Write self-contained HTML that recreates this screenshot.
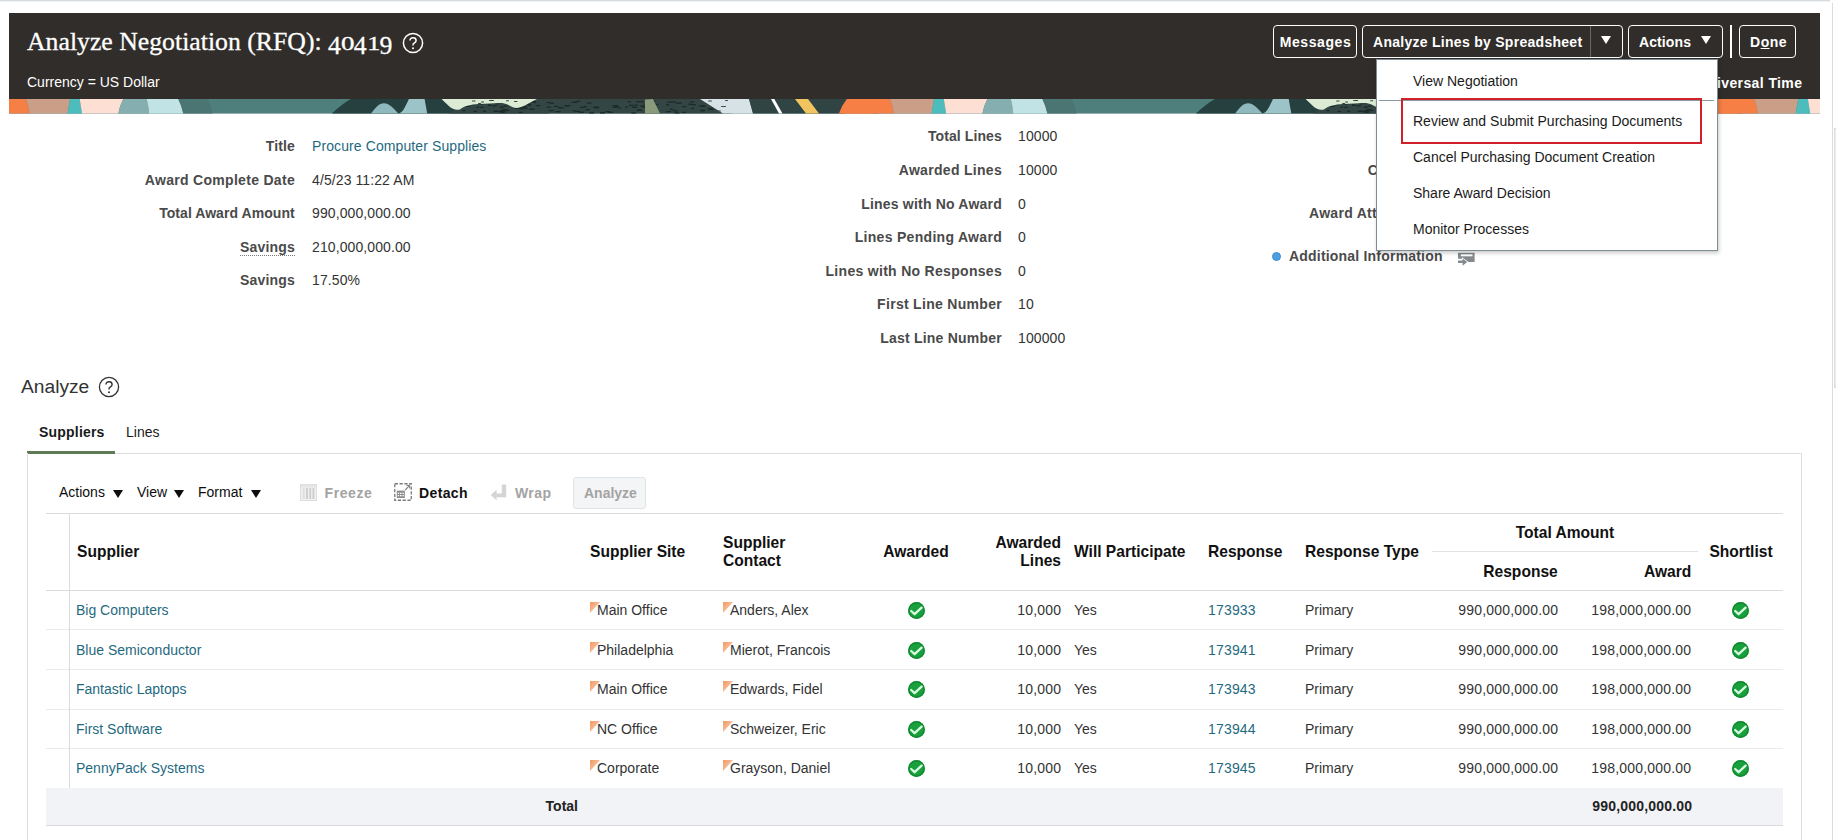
<!DOCTYPE html>
<html>
<head>
<meta charset="utf-8">
<title>Analyze Negotiation</title>
<style>
html,body{margin:0;padding:0;}
body{width:1836px;height:840px;position:relative;overflow:hidden;background:#fff;font-family:"Liberation Sans",sans-serif;font-size:14px;color:#333;}
.abs{position:absolute;white-space:nowrap;}
.t{position:absolute;white-space:nowrap;line-height:16px;height:16px;}
.b{font-weight:bold;}
.lbl{position:absolute;white-space:nowrap;line-height:16px;height:16px;font-weight:bold;color:#4a4a4a;text-align:right;font-size:14px;letter-spacing:0.3px;}
.val{position:absolute;white-space:nowrap;line-height:16px;height:16px;color:#333;font-size:14px;letter-spacing:0.1px;}
.link{color:#1f6a7f !important;}
#hdr{position:absolute;left:9px;top:13px;width:1811px;height:86px;background:#312d2a;}
#banner{position:absolute;left:9px;top:99px;width:1811px;height:14.6px;overflow:hidden;}
.btn{position:absolute;top:25px;height:31px;border:1px solid #fff;border-radius:4px;color:#fff;font-weight:bold;font-size:14px;line-height:32px;text-align:center;letter-spacing:0.45px;box-sizing:content-box;}
#menu{position:absolute;left:1376px;top:59px;width:340px;height:190px;background:#fff;border:1px solid #7f8d97;box-shadow:1px 2px 4px rgba(0,0,0,0.22);}
.mi{position:absolute;left:36px;font-size:14px;color:#1a1a1a;line-height:16px;white-space:nowrap;}
.th{position:absolute;white-space:nowrap;font-weight:bold;color:#111;font-size:16.9px;line-height:18px;transform:scaleX(0.922);margin-top:0.5px;}
.td{position:absolute;white-space:nowrap;font-size:14px;line-height:16px;color:#333;}
.od{position:relative;top:3.6px;}
.ox{display:inline-block;width:12.9px;text-align:center;font-size:18.6px;}
.ox span{display:inline-block;transform:scaleX(1.4);}
.num{letter-spacing:0.18px;margin-right:-0.18px;}
.hl{position:absolute;height:1px;background:#dfe3e6;}
.vl{position:absolute;width:1px;background:#dfe3e6;}
</style>
</head>
<body>
<!-- outer frame -->
<div class="abs" style="left:0;top:0;width:1830px;height:1px;background:#d6dbe0;"></div>
<div class="abs" style="left:0;top:1px;width:1830px;height:1px;background:#f1f3f5;"></div>
<div class="abs" style="left:1832px;top:3px;width:1px;height:837px;background:#dadcdf;"></div>
<div class="abs" style="left:1834px;top:128px;width:2px;height:260px;background:#ecedef;border-left:1px solid #dcdee1;border-top:1px solid #d4d6d9;border-bottom:1px solid #d4d6d9;box-sizing:border-box;"></div>
<!-- header -->
<div id="hdr"></div>
<div class="abs" id="title" style="left:27px;top:25px;font-family:'Liberation Serif',serif;font-size:25.75px;line-height:34px;color:#fff;-webkit-text-stroke:0.3px #fff;">Analyze Negotiation (RFQ): <span class="od">4</span><span class="ox"><span style="transform:scaleX(1.45);">0</span></span><span class="od">4</span><span class="ox"><span>1</span></span><span class="od">9</span></div>
<svg class="abs" style="left:401.4px;top:30.6px;" width="24" height="24" viewBox="0 0 24 24"><circle cx="12" cy="12" r="9.6" fill="none" stroke="#fff" stroke-width="1.5"/><path d="M8.9 9.6c0-1.8 1.3-2.9 3.1-2.9s3.1 1.1 3.1 2.7c0 1.3-.8 1.9-1.7 2.5-.9.6-1.4 1.1-1.4 2.2v.4" fill="none" stroke="#fff" stroke-width="1.5"/><circle cx="12" cy="17.3" r="1" fill="#fff"/></svg>
<div class="t" id="cur" style="left:27px;top:74px;color:#fff;font-size:14px;">Currency = US Dollar</div>
<div class="t b" id="utime" style="right:33.6px;top:74.8px;color:#fff;font-size:14px;letter-spacing:0.4px;">Coordinated Universal Time</div>

<div class="btn" style="left:1273px;width:82px;letter-spacing:0.6px;text-indent:1px;">Messages</div>
<div class="btn" style="left:1362px;width:259px;"></div>
<div class="abs" style="left:1373px;top:26px;line-height:32px;color:#fff;font-weight:bold;font-size:14px;letter-spacing:0.28px;">Analyze Lines by Spreadsheet</div>
<div class="abs" style="left:1590px;top:26px;width:1px;height:31px;background:#6b6764;"></div>
<div class="abs" style="left:1601.3px;top:35.7px;width:0;height:0;border-left:5.75px solid transparent;border-right:5.75px solid transparent;border-top:8px solid #fff;"></div>
<div class="btn" style="left:1628px;width:93px;"></div>
<div class="abs" style="left:1639px;top:26px;line-height:32px;color:#fff;font-weight:bold;font-size:14px;letter-spacing:0.1px;">Actions</div>
<div class="abs" style="left:1701.3px;top:35.7px;width:0;height:0;border-left:5.75px solid transparent;border-right:5.75px solid transparent;border-top:8px solid #fff;"></div>
<div class="abs" style="left:1730px;top:25px;width:2px;height:33px;background:#fff;"></div>
<div class="btn" style="left:1739px;width:55px;text-indent:2px;">D<span style="text-decoration:underline;">o</span>ne</div>

<!-- banner -->
<div id="banner">
<svg width="1811" height="15" viewBox="0 0 1811 15">
<g>
<rect x="0" y="0" width="864.6" height="14.6" fill="#4f7f7d"/>
<path d="M-26.2 0 H16.8 Q20 7 20.7 14.6 H-34.2 Q-31.2 6 -26.2 0 Z" fill="#f57f45"/>
<path d="M16.8 0 H61 L58.5 14.6 H20.7 Q20 7 16.8 0 Z" fill="#cb9f87"/>
<path d="M61 0 H70.7 L73 14.6 H58.5 Z" fill="#4cbcbc"/>
<path d="M70.7 0 H114.3 Q110.5 7 109.3 14.6 H73 Z" fill="#fddfd3"/>
<path d="M114.3 0 H137.7 Q139.6 7 140.2 14.6 H109.3 Q110.5 7 114.3 0 Z" fill="#84aeb0"/>
<path d="M137.7 0 H169.3 Q172.8 7 174.3 14.6 H140.2 Q139.6 7 137.7 0 Z" fill="#c1e3e6"/>
<path d="M169.3 0 H199 Q202 7 203.5 14.6 H174.3 Q172.8 7 169.3 0 Z" fill="#4a7573"/>
<path d="M322.8 14.6 Q333 5 341.7 0 H540 V14.6 Z" fill="#25403f"/>
<path d="M362 14.6 C367 8 370 4.3 375 4.3 C380 4.3 384 9 389.4 14.6 Z" fill="#8fb9bd"/>
<path d="M399.9 0 H415.6 L418.2 14.6 H389.4 C394 13.6 396 8 399.9 0 Z" fill="#9cc4c8"/>
<path d="M440 14.6 C446 10 452 9 457 7 L528 0 H700 L723 14.6 Z" fill="#344644"/>
<rect x="537.2" y="3.0" width="4.6" height="1.3" rx="0.6" fill="#1c2b2a"/>
<rect x="471.1" y="7.7" width="3.9" height="1.3" rx="0.6" fill="#1c2b2a"/>
<rect x="467.3" y="7.4" width="3.1" height="1.3" rx="0.6" fill="#1c2b2a"/>
<rect x="566.0" y="2.1" width="3.2" height="1.3" rx="0.6" fill="#1c2b2a"/>
<rect x="563.6" y="11.3" width="3.3" height="1.3" rx="0.6" fill="#1c2b2a"/>
<rect x="510.7" y="8.9" width="5.4" height="1.3" rx="0.6" fill="#1c2b2a"/>
<rect x="603.8" y="6.0" width="5.4" height="1.3" rx="0.6" fill="#1c2b2a"/>
<rect x="464.3" y="11.7" width="3.7" height="1.3" rx="0.6" fill="#1c2b2a"/>
<rect x="489.9" y="2.6" width="3.8" height="1.3" rx="0.6" fill="#1c2b2a"/>
<rect x="666.6" y="3.4" width="4.5" height="1.3" rx="0.6" fill="#1c2b2a"/>
<rect x="620.0" y="5.7" width="4.4" height="1.3" rx="0.6" fill="#1c2b2a"/>
<rect x="468.5" y="1.9" width="3.5" height="1.3" rx="0.6" fill="#1c2b2a"/>
<rect x="630.9" y="6.4" width="3.8" height="1.3" rx="0.6" fill="#1c2b2a"/>
<rect x="606.0" y="6.7" width="3.7" height="1.3" rx="0.6" fill="#1c2b2a"/>
<rect x="660.9" y="9.7" width="3.6" height="1.3" rx="0.6" fill="#1c2b2a"/>
<rect x="603.1" y="7.6" width="5.2" height="1.3" rx="0.6" fill="#1c2b2a"/>
<rect x="643.8" y="4.7" width="5.5" height="1.3" rx="0.6" fill="#1c2b2a"/>
<rect x="483.1" y="6.3" width="4.9" height="1.3" rx="0.6" fill="#1c2b2a"/>
<rect x="492.0" y="7.2" width="3.1" height="1.3" rx="0.6" fill="#1c2b2a"/>
<rect x="627.7" y="10.5" width="4.4" height="1.3" rx="0.6" fill="#1c2b2a"/>
<rect x="682.3" y="5.0" width="4.7" height="1.3" rx="0.6" fill="#1c2b2a"/>
<rect x="608.3" y="8.3" width="4.1" height="1.3" rx="0.6" fill="#1c2b2a"/>
<rect x="672.9" y="12.7" width="4.2" height="1.3" rx="0.6" fill="#1c2b2a"/>
<rect x="626.7" y="1.9" width="4.8" height="1.3" rx="0.6" fill="#1c2b2a"/>
<rect x="622.2" y="13.3" width="5.1" height="1.3" rx="0.6" fill="#1c2b2a"/>
<rect x="526.8" y="5.9" width="4.7" height="1.3" rx="0.6" fill="#1c2b2a"/>
<rect x="457.9" y="6.8" width="3.4" height="1.3" rx="0.6" fill="#1c2b2a"/>
<rect x="482.8" y="1.9" width="4.9" height="1.3" rx="0.6" fill="#1c2b2a"/>
<rect x="486.0" y="4.2" width="4.0" height="1.3" rx="0.6" fill="#1c2b2a"/>
<rect x="681.2" y="2.2" width="4.1" height="1.3" rx="0.6" fill="#1c2b2a"/>
<rect x="596.5" y="12.0" width="5.0" height="1.3" rx="0.6" fill="#1c2b2a"/>
<rect x="679.2" y="4.6" width="4.0" height="1.3" rx="0.6" fill="#1c2b2a"/>
<rect x="546.4" y="12.0" width="5.4" height="1.3" rx="0.6" fill="#1c2b2a"/>
<rect x="491.7" y="3.3" width="3.6" height="1.3" rx="0.6" fill="#1c2b2a"/>
<rect x="513.4" y="7.1" width="4.5" height="1.3" rx="0.6" fill="#1c2b2a"/>
<rect x="521.1" y="1.2" width="4.0" height="1.3" rx="0.6" fill="#1c2b2a"/>
<rect x="549.1" y="8.1" width="5.4" height="1.3" rx="0.6" fill="#1c2b2a"/>
<rect x="633.6" y="7.5" width="4.5" height="1.3" rx="0.6" fill="#1c2b2a"/>
<rect x="629.8" y="1.9" width="5.2" height="1.3" rx="0.6" fill="#1c2b2a"/>
<rect x="657.1" y="11.9" width="5.0" height="1.3" rx="0.6" fill="#1c2b2a"/>
<rect x="555.2" y="6.1" width="3.3" height="1.3" rx="0.6" fill="#1c2b2a"/>
<rect x="618.8" y="2.0" width="3.2" height="1.3" rx="0.6" fill="#1c2b2a"/>
<rect x="506.9" y="3.2" width="3.9" height="1.3" rx="0.6" fill="#1c2b2a"/>
<rect x="465.8" y="1.2" width="3.4" height="1.3" rx="0.6" fill="#1c2b2a"/>
<rect x="478.7" y="5.6" width="3.1" height="1.3" rx="0.6" fill="#1c2b2a"/>
<rect x="681.9" y="8.7" width="3.4" height="1.3" rx="0.6" fill="#1c2b2a"/>
<rect x="518.3" y="5.4" width="3.9" height="1.3" rx="0.6" fill="#1c2b2a"/>
<rect x="484.3" y="11.6" width="5.5" height="1.3" rx="0.6" fill="#1c2b2a"/>
<rect x="574.6" y="7.1" width="3.2" height="1.3" rx="0.6" fill="#1c2b2a"/>
<rect x="478.9" y="5.4" width="3.7" height="1.3" rx="0.6" fill="#1c2b2a"/>
<rect x="670.0" y="3.2" width="3.1" height="1.3" rx="0.6" fill="#1c2b2a"/>
<rect x="490.6" y="7.8" width="3.1" height="1.3" rx="0.6" fill="#1c2b2a"/>
<rect x="590.9" y="13.1" width="5.2" height="1.3" rx="0.6" fill="#1c2b2a"/>
<rect x="635.1" y="4.4" width="3.9" height="1.3" rx="0.6" fill="#1c2b2a"/>
<rect x="495.9" y="10.6" width="4.3" height="1.3" rx="0.6" fill="#1c2b2a"/>
<rect x="656.9" y="5.2" width="3.6" height="1.3" rx="0.6" fill="#1c2b2a"/>
<rect x="665.4" y="13.2" width="5.1" height="1.3" rx="0.6" fill="#1c2b2a"/>
<rect x="664.0" y="11.2" width="4.8" height="1.3" rx="0.6" fill="#1c2b2a"/>
<rect x="511.6" y="7.5" width="3.9" height="1.3" rx="0.6" fill="#1c2b2a"/>
<rect x="459.6" y="1.5" width="3.7" height="1.3" rx="0.6" fill="#1c2b2a"/>
<rect x="520.2" y="9.6" width="5.4" height="1.3" rx="0.6" fill="#1c2b2a"/>
<rect x="569.6" y="12.6" width="5.5" height="1.3" rx="0.6" fill="#1c2b2a"/>
<rect x="510.0" y="4.0" width="3.5" height="1.3" rx="0.6" fill="#1c2b2a"/>
<rect x="505.8" y="8.8" width="5.3" height="1.3" rx="0.6" fill="#1c2b2a"/>
<rect x="673.0" y="7.0" width="4.6" height="1.3" rx="0.6" fill="#1c2b2a"/>
<rect x="662.3" y="2.2" width="4.7" height="1.3" rx="0.6" fill="#1c2b2a"/>
<rect x="691.3" y="10.7" width="4.9" height="1.3" rx="0.6" fill="#1c2b2a"/>
<rect x="577.7" y="3.4" width="5.0" height="1.3" rx="0.6" fill="#1c2b2a"/>
<rect x="539.5" y="11.0" width="5.4" height="1.3" rx="0.6" fill="#1c2b2a"/>
<rect x="556.1" y="6.1" width="5.4" height="1.3" rx="0.6" fill="#1c2b2a"/>
<rect x="642.6" y="3.3" width="3.3" height="1.3" rx="0.6" fill="#1c2b2a"/>
<rect x="491.8" y="12.2" width="5.0" height="1.3" rx="0.6" fill="#1c2b2a"/>
<rect x="490.4" y="11.3" width="5.5" height="1.3" rx="0.6" fill="#1c2b2a"/>
<rect x="624.9" y="5.5" width="4.4" height="1.3" rx="0.6" fill="#1c2b2a"/>
<rect x="486.4" y="1.4" width="5.4" height="1.3" rx="0.6" fill="#1c2b2a"/>
<rect x="622.9" y="7.6" width="5.3" height="1.3" rx="0.6" fill="#1c2b2a"/>
<rect x="566.1" y="11.8" width="5.1" height="1.3" rx="0.6" fill="#1c2b2a"/>
<rect x="507.5" y="4.3" width="3.7" height="1.3" rx="0.6" fill="#1c2b2a"/>
<rect x="515.3" y="8.4" width="3.6" height="1.3" rx="0.6" fill="#1c2b2a"/>
<rect x="562.2" y="2.8" width="5.3" height="1.3" rx="0.6" fill="#1c2b2a"/>
<rect x="545.0" y="6.8" width="4.5" height="1.3" rx="0.6" fill="#1c2b2a"/>
<rect x="689.8" y="6.3" width="5.3" height="1.3" rx="0.6" fill="#1c2b2a"/>
<rect x="583.9" y="7.7" width="4.3" height="1.3" rx="0.6" fill="#1c2b2a"/>
<rect x="456.9" y="6.6" width="3.5" height="1.3" rx="0.6" fill="#1c2b2a"/>
<rect x="453.0" y="10.9" width="3.4" height="1.3" rx="0.6" fill="#1c2b2a"/>
<rect x="576.5" y="10.0" width="4.4" height="1.3" rx="0.6" fill="#1c2b2a"/>
<rect x="537.7" y="7.5" width="4.4" height="1.3" rx="0.6" fill="#1c2b2a"/>
<rect x="658.3" y="2.5" width="4.4" height="1.3" rx="0.6" fill="#1c2b2a"/>
<rect x="517.4" y="4.6" width="4.9" height="1.3" rx="0.6" fill="#1c2b2a"/>
<rect x="585.5" y="8.1" width="4.9" height="1.3" rx="0.6" fill="#1c2b2a"/>
<rect x="692.0" y="6.6" width="4.5" height="1.3" rx="0.6" fill="#1c2b2a"/>
<rect x="585.0" y="7.4" width="4.7" height="1.3" rx="0.6" fill="#1c2b2a"/>
<rect x="571.0" y="7.7" width="4.2" height="1.3" rx="0.6" fill="#1c2b2a"/>
<rect x="699.6" y="9.7" width="5.2" height="1.3" rx="0.6" fill="#1c2b2a"/>
<rect x="599.2" y="12.7" width="5.1" height="1.3" rx="0.6" fill="#1c2b2a"/>
<rect x="488.1" y="2.7" width="4.1" height="1.3" rx="0.6" fill="#1c2b2a"/>
<rect x="471.1" y="4.1" width="3.2" height="1.3" rx="0.6" fill="#1c2b2a"/>
<rect x="628.1" y="10.8" width="5.2" height="1.3" rx="0.6" fill="#1c2b2a"/>
<rect x="492.6" y="9.9" width="4.7" height="1.3" rx="0.6" fill="#1c2b2a"/>
<rect x="489.6" y="12.0" width="5.4" height="1.3" rx="0.6" fill="#1c2b2a"/>
<rect x="509.8" y="12.8" width="4.0" height="1.3" rx="0.6" fill="#1c2b2a"/>
<rect x="580.1" y="13.3" width="5.1" height="1.3" rx="0.6" fill="#1c2b2a"/>
<rect x="494.5" y="6.5" width="4.3" height="1.3" rx="0.6" fill="#1c2b2a"/>
<rect x="541.2" y="3.6" width="3.8" height="1.3" rx="0.6" fill="#1c2b2a"/>
<rect x="641.9" y="1.4" width="4.4" height="1.3" rx="0.6" fill="#1c2b2a"/>
<rect x="567.8" y="1.4" width="3.8" height="1.3" rx="0.6" fill="#1c2b2a"/>
<rect x="616.1" y="7.4" width="3.2" height="1.3" rx="0.6" fill="#1c2b2a"/>
<rect x="521.8" y="1.7" width="4.9" height="1.3" rx="0.6" fill="#1c2b2a"/>
<rect x="523.1" y="2.8" width="4.1" height="1.3" rx="0.6" fill="#1c2b2a"/>
<rect x="691.7" y="11.2" width="3.6" height="1.3" rx="0.6" fill="#1c2b2a"/>
<rect x="491.3" y="12.4" width="4.4" height="1.3" rx="0.6" fill="#1c2b2a"/>
<rect x="636.2" y="2.3" width="3.1" height="1.3" rx="0.6" fill="#1c2b2a"/>
<rect x="633.0" y="6.4" width="3.2" height="1.3" rx="0.6" fill="#1c2b2a"/>
<rect x="698.8" y="8.9" width="5.0" height="1.3" rx="0.6" fill="#1c2b2a"/>
<rect x="474.0" y="11.6" width="3.2" height="1.3" rx="0.6" fill="#1c2b2a"/>
<path d="M432.6 0 C438 5 442 10.8 448.3 10.8 C452 10.8 453 8 457.4 6.9 C462 5.8 466 5 470 5 C480 5 488 3.6 494 4.3 C500 5 502 8.9 507 8.9 C513 8.9 520 4 528 0 Z" fill="#dcecd4"/>
<rect x="463" y="1.6" width="3.5" height="1" rx="0.5" fill="#33423f"/>
<rect x="472" y="2.4" width="3" height="1" rx="0.5" fill="#33423f"/>
<rect x="480" y="0.9" width="5" height="1" rx="0.5" fill="#33423f"/>
<rect x="497" y="1.2" width="3" height="1" rx="0.5" fill="#33423f"/>
<rect x="505" y="2.0" width="3.5" height="1" rx="0.5" fill="#33423f"/>
<rect x="469" y="4.0" width="3" height="1" rx="0.5" fill="#33423f"/>
<rect x="489" y="4.6" width="3" height="1" rx="0.5" fill="#33423f"/>
<path d="M636 0.5 L644 0 L651 14.6 H636 Z" fill="#8a9a7a"/>
<path d="M691 0 H740 L744 14.6 H714 Z" fill="#d6e2e5"/>
<rect x="699" y="1.5" width="4" height="1.1" rx="0.5" fill="#3a4b49"/>
<rect x="716" y="1.0" width="3" height="1.1" rx="0.5" fill="#3a4b49"/>
<rect x="712" y="7" width="5" height="1.1" rx="0.5" fill="#3a4b49"/>
<rect x="708" y="11.5" width="4" height="1.1" rx="0.5" fill="#3a4b49"/>
<path d="M740 0 H845 L835 14.6 H744 Z" fill="#2f4443"/>
<path d="M762 0 H765.3 L773.5 14.6 H770 Z" fill="#ffffff"/>
<path d="M786 0 H799 L810 14.6 H797 Z" fill="#f2c45f"/>
<path d="M839 0 Q834 6 831 14.6 H869.1 V0 Z" fill="#f57f45"/>
</g>
<g transform="translate(864.1,0)">
<rect x="0" y="0" width="864.6" height="14.6" fill="#4f7f7d"/>
<path d="M-26.2 0 H16.8 Q20 7 20.7 14.6 H-34.2 Q-31.2 6 -26.2 0 Z" fill="#f57f45"/>
<path d="M16.8 0 H61 L58.5 14.6 H20.7 Q20 7 16.8 0 Z" fill="#cb9f87"/>
<path d="M61 0 H70.7 L73 14.6 H58.5 Z" fill="#4cbcbc"/>
<path d="M70.7 0 H114.3 Q110.5 7 109.3 14.6 H73 Z" fill="#fddfd3"/>
<path d="M114.3 0 H137.7 Q139.6 7 140.2 14.6 H109.3 Q110.5 7 114.3 0 Z" fill="#84aeb0"/>
<path d="M137.7 0 H169.3 Q172.8 7 174.3 14.6 H140.2 Q139.6 7 137.7 0 Z" fill="#c1e3e6"/>
<path d="M169.3 0 H199 Q202 7 203.5 14.6 H174.3 Q172.8 7 169.3 0 Z" fill="#4a7573"/>
<path d="M322.8 14.6 Q333 5 341.7 0 H540 V14.6 Z" fill="#25403f"/>
<path d="M362 14.6 C367 8 370 4.3 375 4.3 C380 4.3 384 9 389.4 14.6 Z" fill="#8fb9bd"/>
<path d="M399.9 0 H415.6 L418.2 14.6 H389.4 C394 13.6 396 8 399.9 0 Z" fill="#9cc4c8"/>
<path d="M440 14.6 C446 10 452 9 457 7 L528 0 H700 L723 14.6 Z" fill="#344644"/>
<rect x="537.2" y="3.0" width="4.6" height="1.3" rx="0.6" fill="#1c2b2a"/>
<rect x="471.1" y="7.7" width="3.9" height="1.3" rx="0.6" fill="#1c2b2a"/>
<rect x="467.3" y="7.4" width="3.1" height="1.3" rx="0.6" fill="#1c2b2a"/>
<rect x="566.0" y="2.1" width="3.2" height="1.3" rx="0.6" fill="#1c2b2a"/>
<rect x="563.6" y="11.3" width="3.3" height="1.3" rx="0.6" fill="#1c2b2a"/>
<rect x="510.7" y="8.9" width="5.4" height="1.3" rx="0.6" fill="#1c2b2a"/>
<rect x="603.8" y="6.0" width="5.4" height="1.3" rx="0.6" fill="#1c2b2a"/>
<rect x="464.3" y="11.7" width="3.7" height="1.3" rx="0.6" fill="#1c2b2a"/>
<rect x="489.9" y="2.6" width="3.8" height="1.3" rx="0.6" fill="#1c2b2a"/>
<rect x="666.6" y="3.4" width="4.5" height="1.3" rx="0.6" fill="#1c2b2a"/>
<rect x="620.0" y="5.7" width="4.4" height="1.3" rx="0.6" fill="#1c2b2a"/>
<rect x="468.5" y="1.9" width="3.5" height="1.3" rx="0.6" fill="#1c2b2a"/>
<rect x="630.9" y="6.4" width="3.8" height="1.3" rx="0.6" fill="#1c2b2a"/>
<rect x="606.0" y="6.7" width="3.7" height="1.3" rx="0.6" fill="#1c2b2a"/>
<rect x="660.9" y="9.7" width="3.6" height="1.3" rx="0.6" fill="#1c2b2a"/>
<rect x="603.1" y="7.6" width="5.2" height="1.3" rx="0.6" fill="#1c2b2a"/>
<rect x="643.8" y="4.7" width="5.5" height="1.3" rx="0.6" fill="#1c2b2a"/>
<rect x="483.1" y="6.3" width="4.9" height="1.3" rx="0.6" fill="#1c2b2a"/>
<rect x="492.0" y="7.2" width="3.1" height="1.3" rx="0.6" fill="#1c2b2a"/>
<rect x="627.7" y="10.5" width="4.4" height="1.3" rx="0.6" fill="#1c2b2a"/>
<rect x="682.3" y="5.0" width="4.7" height="1.3" rx="0.6" fill="#1c2b2a"/>
<rect x="608.3" y="8.3" width="4.1" height="1.3" rx="0.6" fill="#1c2b2a"/>
<rect x="672.9" y="12.7" width="4.2" height="1.3" rx="0.6" fill="#1c2b2a"/>
<rect x="626.7" y="1.9" width="4.8" height="1.3" rx="0.6" fill="#1c2b2a"/>
<rect x="622.2" y="13.3" width="5.1" height="1.3" rx="0.6" fill="#1c2b2a"/>
<rect x="526.8" y="5.9" width="4.7" height="1.3" rx="0.6" fill="#1c2b2a"/>
<rect x="457.9" y="6.8" width="3.4" height="1.3" rx="0.6" fill="#1c2b2a"/>
<rect x="482.8" y="1.9" width="4.9" height="1.3" rx="0.6" fill="#1c2b2a"/>
<rect x="486.0" y="4.2" width="4.0" height="1.3" rx="0.6" fill="#1c2b2a"/>
<rect x="681.2" y="2.2" width="4.1" height="1.3" rx="0.6" fill="#1c2b2a"/>
<rect x="596.5" y="12.0" width="5.0" height="1.3" rx="0.6" fill="#1c2b2a"/>
<rect x="679.2" y="4.6" width="4.0" height="1.3" rx="0.6" fill="#1c2b2a"/>
<rect x="546.4" y="12.0" width="5.4" height="1.3" rx="0.6" fill="#1c2b2a"/>
<rect x="491.7" y="3.3" width="3.6" height="1.3" rx="0.6" fill="#1c2b2a"/>
<rect x="513.4" y="7.1" width="4.5" height="1.3" rx="0.6" fill="#1c2b2a"/>
<rect x="521.1" y="1.2" width="4.0" height="1.3" rx="0.6" fill="#1c2b2a"/>
<rect x="549.1" y="8.1" width="5.4" height="1.3" rx="0.6" fill="#1c2b2a"/>
<rect x="633.6" y="7.5" width="4.5" height="1.3" rx="0.6" fill="#1c2b2a"/>
<rect x="629.8" y="1.9" width="5.2" height="1.3" rx="0.6" fill="#1c2b2a"/>
<rect x="657.1" y="11.9" width="5.0" height="1.3" rx="0.6" fill="#1c2b2a"/>
<rect x="555.2" y="6.1" width="3.3" height="1.3" rx="0.6" fill="#1c2b2a"/>
<rect x="618.8" y="2.0" width="3.2" height="1.3" rx="0.6" fill="#1c2b2a"/>
<rect x="506.9" y="3.2" width="3.9" height="1.3" rx="0.6" fill="#1c2b2a"/>
<rect x="465.8" y="1.2" width="3.4" height="1.3" rx="0.6" fill="#1c2b2a"/>
<rect x="478.7" y="5.6" width="3.1" height="1.3" rx="0.6" fill="#1c2b2a"/>
<rect x="681.9" y="8.7" width="3.4" height="1.3" rx="0.6" fill="#1c2b2a"/>
<rect x="518.3" y="5.4" width="3.9" height="1.3" rx="0.6" fill="#1c2b2a"/>
<rect x="484.3" y="11.6" width="5.5" height="1.3" rx="0.6" fill="#1c2b2a"/>
<rect x="574.6" y="7.1" width="3.2" height="1.3" rx="0.6" fill="#1c2b2a"/>
<rect x="478.9" y="5.4" width="3.7" height="1.3" rx="0.6" fill="#1c2b2a"/>
<rect x="670.0" y="3.2" width="3.1" height="1.3" rx="0.6" fill="#1c2b2a"/>
<rect x="490.6" y="7.8" width="3.1" height="1.3" rx="0.6" fill="#1c2b2a"/>
<rect x="590.9" y="13.1" width="5.2" height="1.3" rx="0.6" fill="#1c2b2a"/>
<rect x="635.1" y="4.4" width="3.9" height="1.3" rx="0.6" fill="#1c2b2a"/>
<rect x="495.9" y="10.6" width="4.3" height="1.3" rx="0.6" fill="#1c2b2a"/>
<rect x="656.9" y="5.2" width="3.6" height="1.3" rx="0.6" fill="#1c2b2a"/>
<rect x="665.4" y="13.2" width="5.1" height="1.3" rx="0.6" fill="#1c2b2a"/>
<rect x="664.0" y="11.2" width="4.8" height="1.3" rx="0.6" fill="#1c2b2a"/>
<rect x="511.6" y="7.5" width="3.9" height="1.3" rx="0.6" fill="#1c2b2a"/>
<rect x="459.6" y="1.5" width="3.7" height="1.3" rx="0.6" fill="#1c2b2a"/>
<rect x="520.2" y="9.6" width="5.4" height="1.3" rx="0.6" fill="#1c2b2a"/>
<rect x="569.6" y="12.6" width="5.5" height="1.3" rx="0.6" fill="#1c2b2a"/>
<rect x="510.0" y="4.0" width="3.5" height="1.3" rx="0.6" fill="#1c2b2a"/>
<rect x="505.8" y="8.8" width="5.3" height="1.3" rx="0.6" fill="#1c2b2a"/>
<rect x="673.0" y="7.0" width="4.6" height="1.3" rx="0.6" fill="#1c2b2a"/>
<rect x="662.3" y="2.2" width="4.7" height="1.3" rx="0.6" fill="#1c2b2a"/>
<rect x="691.3" y="10.7" width="4.9" height="1.3" rx="0.6" fill="#1c2b2a"/>
<rect x="577.7" y="3.4" width="5.0" height="1.3" rx="0.6" fill="#1c2b2a"/>
<rect x="539.5" y="11.0" width="5.4" height="1.3" rx="0.6" fill="#1c2b2a"/>
<rect x="556.1" y="6.1" width="5.4" height="1.3" rx="0.6" fill="#1c2b2a"/>
<rect x="642.6" y="3.3" width="3.3" height="1.3" rx="0.6" fill="#1c2b2a"/>
<rect x="491.8" y="12.2" width="5.0" height="1.3" rx="0.6" fill="#1c2b2a"/>
<rect x="490.4" y="11.3" width="5.5" height="1.3" rx="0.6" fill="#1c2b2a"/>
<rect x="624.9" y="5.5" width="4.4" height="1.3" rx="0.6" fill="#1c2b2a"/>
<rect x="486.4" y="1.4" width="5.4" height="1.3" rx="0.6" fill="#1c2b2a"/>
<rect x="622.9" y="7.6" width="5.3" height="1.3" rx="0.6" fill="#1c2b2a"/>
<rect x="566.1" y="11.8" width="5.1" height="1.3" rx="0.6" fill="#1c2b2a"/>
<rect x="507.5" y="4.3" width="3.7" height="1.3" rx="0.6" fill="#1c2b2a"/>
<rect x="515.3" y="8.4" width="3.6" height="1.3" rx="0.6" fill="#1c2b2a"/>
<rect x="562.2" y="2.8" width="5.3" height="1.3" rx="0.6" fill="#1c2b2a"/>
<rect x="545.0" y="6.8" width="4.5" height="1.3" rx="0.6" fill="#1c2b2a"/>
<rect x="689.8" y="6.3" width="5.3" height="1.3" rx="0.6" fill="#1c2b2a"/>
<rect x="583.9" y="7.7" width="4.3" height="1.3" rx="0.6" fill="#1c2b2a"/>
<rect x="456.9" y="6.6" width="3.5" height="1.3" rx="0.6" fill="#1c2b2a"/>
<rect x="453.0" y="10.9" width="3.4" height="1.3" rx="0.6" fill="#1c2b2a"/>
<rect x="576.5" y="10.0" width="4.4" height="1.3" rx="0.6" fill="#1c2b2a"/>
<rect x="537.7" y="7.5" width="4.4" height="1.3" rx="0.6" fill="#1c2b2a"/>
<rect x="658.3" y="2.5" width="4.4" height="1.3" rx="0.6" fill="#1c2b2a"/>
<rect x="517.4" y="4.6" width="4.9" height="1.3" rx="0.6" fill="#1c2b2a"/>
<rect x="585.5" y="8.1" width="4.9" height="1.3" rx="0.6" fill="#1c2b2a"/>
<rect x="692.0" y="6.6" width="4.5" height="1.3" rx="0.6" fill="#1c2b2a"/>
<rect x="585.0" y="7.4" width="4.7" height="1.3" rx="0.6" fill="#1c2b2a"/>
<rect x="571.0" y="7.7" width="4.2" height="1.3" rx="0.6" fill="#1c2b2a"/>
<rect x="699.6" y="9.7" width="5.2" height="1.3" rx="0.6" fill="#1c2b2a"/>
<rect x="599.2" y="12.7" width="5.1" height="1.3" rx="0.6" fill="#1c2b2a"/>
<rect x="488.1" y="2.7" width="4.1" height="1.3" rx="0.6" fill="#1c2b2a"/>
<rect x="471.1" y="4.1" width="3.2" height="1.3" rx="0.6" fill="#1c2b2a"/>
<rect x="628.1" y="10.8" width="5.2" height="1.3" rx="0.6" fill="#1c2b2a"/>
<rect x="492.6" y="9.9" width="4.7" height="1.3" rx="0.6" fill="#1c2b2a"/>
<rect x="489.6" y="12.0" width="5.4" height="1.3" rx="0.6" fill="#1c2b2a"/>
<rect x="509.8" y="12.8" width="4.0" height="1.3" rx="0.6" fill="#1c2b2a"/>
<rect x="580.1" y="13.3" width="5.1" height="1.3" rx="0.6" fill="#1c2b2a"/>
<rect x="494.5" y="6.5" width="4.3" height="1.3" rx="0.6" fill="#1c2b2a"/>
<rect x="541.2" y="3.6" width="3.8" height="1.3" rx="0.6" fill="#1c2b2a"/>
<rect x="641.9" y="1.4" width="4.4" height="1.3" rx="0.6" fill="#1c2b2a"/>
<rect x="567.8" y="1.4" width="3.8" height="1.3" rx="0.6" fill="#1c2b2a"/>
<rect x="616.1" y="7.4" width="3.2" height="1.3" rx="0.6" fill="#1c2b2a"/>
<rect x="521.8" y="1.7" width="4.9" height="1.3" rx="0.6" fill="#1c2b2a"/>
<rect x="523.1" y="2.8" width="4.1" height="1.3" rx="0.6" fill="#1c2b2a"/>
<rect x="691.7" y="11.2" width="3.6" height="1.3" rx="0.6" fill="#1c2b2a"/>
<rect x="491.3" y="12.4" width="4.4" height="1.3" rx="0.6" fill="#1c2b2a"/>
<rect x="636.2" y="2.3" width="3.1" height="1.3" rx="0.6" fill="#1c2b2a"/>
<rect x="633.0" y="6.4" width="3.2" height="1.3" rx="0.6" fill="#1c2b2a"/>
<rect x="698.8" y="8.9" width="5.0" height="1.3" rx="0.6" fill="#1c2b2a"/>
<rect x="474.0" y="11.6" width="3.2" height="1.3" rx="0.6" fill="#1c2b2a"/>
<path d="M432.6 0 C438 5 442 10.8 448.3 10.8 C452 10.8 453 8 457.4 6.9 C462 5.8 466 5 470 5 C480 5 488 3.6 494 4.3 C500 5 502 8.9 507 8.9 C513 8.9 520 4 528 0 Z" fill="#dcecd4"/>
<rect x="463" y="1.6" width="3.5" height="1" rx="0.5" fill="#33423f"/>
<rect x="472" y="2.4" width="3" height="1" rx="0.5" fill="#33423f"/>
<rect x="480" y="0.9" width="5" height="1" rx="0.5" fill="#33423f"/>
<rect x="497" y="1.2" width="3" height="1" rx="0.5" fill="#33423f"/>
<rect x="505" y="2.0" width="3.5" height="1" rx="0.5" fill="#33423f"/>
<rect x="469" y="4.0" width="3" height="1" rx="0.5" fill="#33423f"/>
<rect x="489" y="4.6" width="3" height="1" rx="0.5" fill="#33423f"/>
<path d="M636 0.5 L644 0 L651 14.6 H636 Z" fill="#8a9a7a"/>
<path d="M691 0 H740 L744 14.6 H714 Z" fill="#d6e2e5"/>
<rect x="699" y="1.5" width="4" height="1.1" rx="0.5" fill="#3a4b49"/>
<rect x="716" y="1.0" width="3" height="1.1" rx="0.5" fill="#3a4b49"/>
<rect x="712" y="7" width="5" height="1.1" rx="0.5" fill="#3a4b49"/>
<rect x="708" y="11.5" width="4" height="1.1" rx="0.5" fill="#3a4b49"/>
<path d="M740 0 H845 L835 14.6 H744 Z" fill="#2f4443"/>
<path d="M762 0 H765.3 L773.5 14.6 H770 Z" fill="#ffffff"/>
<path d="M786 0 H799 L810 14.6 H797 Z" fill="#f2c45f"/>
<path d="M839 0 Q834 6 831 14.6 H869.1 V0 Z" fill="#f57f45"/>
</g>
<g transform="translate(1728.2,0)">
<rect x="0" y="0" width="864.6" height="14.6" fill="#4f7f7d"/>
<path d="M-26.2 0 H16.8 Q20 7 20.7 14.6 H-34.2 Q-31.2 6 -26.2 0 Z" fill="#f57f45"/>
<path d="M16.8 0 H61 L58.5 14.6 H20.7 Q20 7 16.8 0 Z" fill="#cb9f87"/>
<path d="M61 0 H70.7 L73 14.6 H58.5 Z" fill="#4cbcbc"/>
<path d="M70.7 0 H114.3 Q110.5 7 109.3 14.6 H73 Z" fill="#fddfd3"/>
<path d="M114.3 0 H137.7 Q139.6 7 140.2 14.6 H109.3 Q110.5 7 114.3 0 Z" fill="#84aeb0"/>
<path d="M137.7 0 H169.3 Q172.8 7 174.3 14.6 H140.2 Q139.6 7 137.7 0 Z" fill="#c1e3e6"/>
<path d="M169.3 0 H199 Q202 7 203.5 14.6 H174.3 Q172.8 7 169.3 0 Z" fill="#4a7573"/>
<path d="M322.8 14.6 Q333 5 341.7 0 H540 V14.6 Z" fill="#25403f"/>
<path d="M362 14.6 C367 8 370 4.3 375 4.3 C380 4.3 384 9 389.4 14.6 Z" fill="#8fb9bd"/>
<path d="M399.9 0 H415.6 L418.2 14.6 H389.4 C394 13.6 396 8 399.9 0 Z" fill="#9cc4c8"/>
<path d="M440 14.6 C446 10 452 9 457 7 L528 0 H700 L723 14.6 Z" fill="#344644"/>
<rect x="537.2" y="3.0" width="4.6" height="1.3" rx="0.6" fill="#1c2b2a"/>
<rect x="471.1" y="7.7" width="3.9" height="1.3" rx="0.6" fill="#1c2b2a"/>
<rect x="467.3" y="7.4" width="3.1" height="1.3" rx="0.6" fill="#1c2b2a"/>
<rect x="566.0" y="2.1" width="3.2" height="1.3" rx="0.6" fill="#1c2b2a"/>
<rect x="563.6" y="11.3" width="3.3" height="1.3" rx="0.6" fill="#1c2b2a"/>
<rect x="510.7" y="8.9" width="5.4" height="1.3" rx="0.6" fill="#1c2b2a"/>
<rect x="603.8" y="6.0" width="5.4" height="1.3" rx="0.6" fill="#1c2b2a"/>
<rect x="464.3" y="11.7" width="3.7" height="1.3" rx="0.6" fill="#1c2b2a"/>
<rect x="489.9" y="2.6" width="3.8" height="1.3" rx="0.6" fill="#1c2b2a"/>
<rect x="666.6" y="3.4" width="4.5" height="1.3" rx="0.6" fill="#1c2b2a"/>
<rect x="620.0" y="5.7" width="4.4" height="1.3" rx="0.6" fill="#1c2b2a"/>
<rect x="468.5" y="1.9" width="3.5" height="1.3" rx="0.6" fill="#1c2b2a"/>
<rect x="630.9" y="6.4" width="3.8" height="1.3" rx="0.6" fill="#1c2b2a"/>
<rect x="606.0" y="6.7" width="3.7" height="1.3" rx="0.6" fill="#1c2b2a"/>
<rect x="660.9" y="9.7" width="3.6" height="1.3" rx="0.6" fill="#1c2b2a"/>
<rect x="603.1" y="7.6" width="5.2" height="1.3" rx="0.6" fill="#1c2b2a"/>
<rect x="643.8" y="4.7" width="5.5" height="1.3" rx="0.6" fill="#1c2b2a"/>
<rect x="483.1" y="6.3" width="4.9" height="1.3" rx="0.6" fill="#1c2b2a"/>
<rect x="492.0" y="7.2" width="3.1" height="1.3" rx="0.6" fill="#1c2b2a"/>
<rect x="627.7" y="10.5" width="4.4" height="1.3" rx="0.6" fill="#1c2b2a"/>
<rect x="682.3" y="5.0" width="4.7" height="1.3" rx="0.6" fill="#1c2b2a"/>
<rect x="608.3" y="8.3" width="4.1" height="1.3" rx="0.6" fill="#1c2b2a"/>
<rect x="672.9" y="12.7" width="4.2" height="1.3" rx="0.6" fill="#1c2b2a"/>
<rect x="626.7" y="1.9" width="4.8" height="1.3" rx="0.6" fill="#1c2b2a"/>
<rect x="622.2" y="13.3" width="5.1" height="1.3" rx="0.6" fill="#1c2b2a"/>
<rect x="526.8" y="5.9" width="4.7" height="1.3" rx="0.6" fill="#1c2b2a"/>
<rect x="457.9" y="6.8" width="3.4" height="1.3" rx="0.6" fill="#1c2b2a"/>
<rect x="482.8" y="1.9" width="4.9" height="1.3" rx="0.6" fill="#1c2b2a"/>
<rect x="486.0" y="4.2" width="4.0" height="1.3" rx="0.6" fill="#1c2b2a"/>
<rect x="681.2" y="2.2" width="4.1" height="1.3" rx="0.6" fill="#1c2b2a"/>
<rect x="596.5" y="12.0" width="5.0" height="1.3" rx="0.6" fill="#1c2b2a"/>
<rect x="679.2" y="4.6" width="4.0" height="1.3" rx="0.6" fill="#1c2b2a"/>
<rect x="546.4" y="12.0" width="5.4" height="1.3" rx="0.6" fill="#1c2b2a"/>
<rect x="491.7" y="3.3" width="3.6" height="1.3" rx="0.6" fill="#1c2b2a"/>
<rect x="513.4" y="7.1" width="4.5" height="1.3" rx="0.6" fill="#1c2b2a"/>
<rect x="521.1" y="1.2" width="4.0" height="1.3" rx="0.6" fill="#1c2b2a"/>
<rect x="549.1" y="8.1" width="5.4" height="1.3" rx="0.6" fill="#1c2b2a"/>
<rect x="633.6" y="7.5" width="4.5" height="1.3" rx="0.6" fill="#1c2b2a"/>
<rect x="629.8" y="1.9" width="5.2" height="1.3" rx="0.6" fill="#1c2b2a"/>
<rect x="657.1" y="11.9" width="5.0" height="1.3" rx="0.6" fill="#1c2b2a"/>
<rect x="555.2" y="6.1" width="3.3" height="1.3" rx="0.6" fill="#1c2b2a"/>
<rect x="618.8" y="2.0" width="3.2" height="1.3" rx="0.6" fill="#1c2b2a"/>
<rect x="506.9" y="3.2" width="3.9" height="1.3" rx="0.6" fill="#1c2b2a"/>
<rect x="465.8" y="1.2" width="3.4" height="1.3" rx="0.6" fill="#1c2b2a"/>
<rect x="478.7" y="5.6" width="3.1" height="1.3" rx="0.6" fill="#1c2b2a"/>
<rect x="681.9" y="8.7" width="3.4" height="1.3" rx="0.6" fill="#1c2b2a"/>
<rect x="518.3" y="5.4" width="3.9" height="1.3" rx="0.6" fill="#1c2b2a"/>
<rect x="484.3" y="11.6" width="5.5" height="1.3" rx="0.6" fill="#1c2b2a"/>
<rect x="574.6" y="7.1" width="3.2" height="1.3" rx="0.6" fill="#1c2b2a"/>
<rect x="478.9" y="5.4" width="3.7" height="1.3" rx="0.6" fill="#1c2b2a"/>
<rect x="670.0" y="3.2" width="3.1" height="1.3" rx="0.6" fill="#1c2b2a"/>
<rect x="490.6" y="7.8" width="3.1" height="1.3" rx="0.6" fill="#1c2b2a"/>
<rect x="590.9" y="13.1" width="5.2" height="1.3" rx="0.6" fill="#1c2b2a"/>
<rect x="635.1" y="4.4" width="3.9" height="1.3" rx="0.6" fill="#1c2b2a"/>
<rect x="495.9" y="10.6" width="4.3" height="1.3" rx="0.6" fill="#1c2b2a"/>
<rect x="656.9" y="5.2" width="3.6" height="1.3" rx="0.6" fill="#1c2b2a"/>
<rect x="665.4" y="13.2" width="5.1" height="1.3" rx="0.6" fill="#1c2b2a"/>
<rect x="664.0" y="11.2" width="4.8" height="1.3" rx="0.6" fill="#1c2b2a"/>
<rect x="511.6" y="7.5" width="3.9" height="1.3" rx="0.6" fill="#1c2b2a"/>
<rect x="459.6" y="1.5" width="3.7" height="1.3" rx="0.6" fill="#1c2b2a"/>
<rect x="520.2" y="9.6" width="5.4" height="1.3" rx="0.6" fill="#1c2b2a"/>
<rect x="569.6" y="12.6" width="5.5" height="1.3" rx="0.6" fill="#1c2b2a"/>
<rect x="510.0" y="4.0" width="3.5" height="1.3" rx="0.6" fill="#1c2b2a"/>
<rect x="505.8" y="8.8" width="5.3" height="1.3" rx="0.6" fill="#1c2b2a"/>
<rect x="673.0" y="7.0" width="4.6" height="1.3" rx="0.6" fill="#1c2b2a"/>
<rect x="662.3" y="2.2" width="4.7" height="1.3" rx="0.6" fill="#1c2b2a"/>
<rect x="691.3" y="10.7" width="4.9" height="1.3" rx="0.6" fill="#1c2b2a"/>
<rect x="577.7" y="3.4" width="5.0" height="1.3" rx="0.6" fill="#1c2b2a"/>
<rect x="539.5" y="11.0" width="5.4" height="1.3" rx="0.6" fill="#1c2b2a"/>
<rect x="556.1" y="6.1" width="5.4" height="1.3" rx="0.6" fill="#1c2b2a"/>
<rect x="642.6" y="3.3" width="3.3" height="1.3" rx="0.6" fill="#1c2b2a"/>
<rect x="491.8" y="12.2" width="5.0" height="1.3" rx="0.6" fill="#1c2b2a"/>
<rect x="490.4" y="11.3" width="5.5" height="1.3" rx="0.6" fill="#1c2b2a"/>
<rect x="624.9" y="5.5" width="4.4" height="1.3" rx="0.6" fill="#1c2b2a"/>
<rect x="486.4" y="1.4" width="5.4" height="1.3" rx="0.6" fill="#1c2b2a"/>
<rect x="622.9" y="7.6" width="5.3" height="1.3" rx="0.6" fill="#1c2b2a"/>
<rect x="566.1" y="11.8" width="5.1" height="1.3" rx="0.6" fill="#1c2b2a"/>
<rect x="507.5" y="4.3" width="3.7" height="1.3" rx="0.6" fill="#1c2b2a"/>
<rect x="515.3" y="8.4" width="3.6" height="1.3" rx="0.6" fill="#1c2b2a"/>
<rect x="562.2" y="2.8" width="5.3" height="1.3" rx="0.6" fill="#1c2b2a"/>
<rect x="545.0" y="6.8" width="4.5" height="1.3" rx="0.6" fill="#1c2b2a"/>
<rect x="689.8" y="6.3" width="5.3" height="1.3" rx="0.6" fill="#1c2b2a"/>
<rect x="583.9" y="7.7" width="4.3" height="1.3" rx="0.6" fill="#1c2b2a"/>
<rect x="456.9" y="6.6" width="3.5" height="1.3" rx="0.6" fill="#1c2b2a"/>
<rect x="453.0" y="10.9" width="3.4" height="1.3" rx="0.6" fill="#1c2b2a"/>
<rect x="576.5" y="10.0" width="4.4" height="1.3" rx="0.6" fill="#1c2b2a"/>
<rect x="537.7" y="7.5" width="4.4" height="1.3" rx="0.6" fill="#1c2b2a"/>
<rect x="658.3" y="2.5" width="4.4" height="1.3" rx="0.6" fill="#1c2b2a"/>
<rect x="517.4" y="4.6" width="4.9" height="1.3" rx="0.6" fill="#1c2b2a"/>
<rect x="585.5" y="8.1" width="4.9" height="1.3" rx="0.6" fill="#1c2b2a"/>
<rect x="692.0" y="6.6" width="4.5" height="1.3" rx="0.6" fill="#1c2b2a"/>
<rect x="585.0" y="7.4" width="4.7" height="1.3" rx="0.6" fill="#1c2b2a"/>
<rect x="571.0" y="7.7" width="4.2" height="1.3" rx="0.6" fill="#1c2b2a"/>
<rect x="699.6" y="9.7" width="5.2" height="1.3" rx="0.6" fill="#1c2b2a"/>
<rect x="599.2" y="12.7" width="5.1" height="1.3" rx="0.6" fill="#1c2b2a"/>
<rect x="488.1" y="2.7" width="4.1" height="1.3" rx="0.6" fill="#1c2b2a"/>
<rect x="471.1" y="4.1" width="3.2" height="1.3" rx="0.6" fill="#1c2b2a"/>
<rect x="628.1" y="10.8" width="5.2" height="1.3" rx="0.6" fill="#1c2b2a"/>
<rect x="492.6" y="9.9" width="4.7" height="1.3" rx="0.6" fill="#1c2b2a"/>
<rect x="489.6" y="12.0" width="5.4" height="1.3" rx="0.6" fill="#1c2b2a"/>
<rect x="509.8" y="12.8" width="4.0" height="1.3" rx="0.6" fill="#1c2b2a"/>
<rect x="580.1" y="13.3" width="5.1" height="1.3" rx="0.6" fill="#1c2b2a"/>
<rect x="494.5" y="6.5" width="4.3" height="1.3" rx="0.6" fill="#1c2b2a"/>
<rect x="541.2" y="3.6" width="3.8" height="1.3" rx="0.6" fill="#1c2b2a"/>
<rect x="641.9" y="1.4" width="4.4" height="1.3" rx="0.6" fill="#1c2b2a"/>
<rect x="567.8" y="1.4" width="3.8" height="1.3" rx="0.6" fill="#1c2b2a"/>
<rect x="616.1" y="7.4" width="3.2" height="1.3" rx="0.6" fill="#1c2b2a"/>
<rect x="521.8" y="1.7" width="4.9" height="1.3" rx="0.6" fill="#1c2b2a"/>
<rect x="523.1" y="2.8" width="4.1" height="1.3" rx="0.6" fill="#1c2b2a"/>
<rect x="691.7" y="11.2" width="3.6" height="1.3" rx="0.6" fill="#1c2b2a"/>
<rect x="491.3" y="12.4" width="4.4" height="1.3" rx="0.6" fill="#1c2b2a"/>
<rect x="636.2" y="2.3" width="3.1" height="1.3" rx="0.6" fill="#1c2b2a"/>
<rect x="633.0" y="6.4" width="3.2" height="1.3" rx="0.6" fill="#1c2b2a"/>
<rect x="698.8" y="8.9" width="5.0" height="1.3" rx="0.6" fill="#1c2b2a"/>
<rect x="474.0" y="11.6" width="3.2" height="1.3" rx="0.6" fill="#1c2b2a"/>
<path d="M432.6 0 C438 5 442 10.8 448.3 10.8 C452 10.8 453 8 457.4 6.9 C462 5.8 466 5 470 5 C480 5 488 3.6 494 4.3 C500 5 502 8.9 507 8.9 C513 8.9 520 4 528 0 Z" fill="#dcecd4"/>
<rect x="463" y="1.6" width="3.5" height="1" rx="0.5" fill="#33423f"/>
<rect x="472" y="2.4" width="3" height="1" rx="0.5" fill="#33423f"/>
<rect x="480" y="0.9" width="5" height="1" rx="0.5" fill="#33423f"/>
<rect x="497" y="1.2" width="3" height="1" rx="0.5" fill="#33423f"/>
<rect x="505" y="2.0" width="3.5" height="1" rx="0.5" fill="#33423f"/>
<rect x="469" y="4.0" width="3" height="1" rx="0.5" fill="#33423f"/>
<rect x="489" y="4.6" width="3" height="1" rx="0.5" fill="#33423f"/>
<path d="M636 0.5 L644 0 L651 14.6 H636 Z" fill="#8a9a7a"/>
<path d="M691 0 H740 L744 14.6 H714 Z" fill="#d6e2e5"/>
<rect x="699" y="1.5" width="4" height="1.1" rx="0.5" fill="#3a4b49"/>
<rect x="716" y="1.0" width="3" height="1.1" rx="0.5" fill="#3a4b49"/>
<rect x="712" y="7" width="5" height="1.1" rx="0.5" fill="#3a4b49"/>
<rect x="708" y="11.5" width="4" height="1.1" rx="0.5" fill="#3a4b49"/>
<path d="M740 0 H845 L835 14.6 H744 Z" fill="#2f4443"/>
<path d="M762 0 H765.3 L773.5 14.6 H770 Z" fill="#ffffff"/>
<path d="M786 0 H799 L810 14.6 H797 Z" fill="#f2c45f"/>
<path d="M839 0 Q834 6 831 14.6 H869.1 V0 Z" fill="#f57f45"/>
</g>
</svg>
</div>

<!-- left column -->
<div class="lbl" style="right:1541px;top:138px;letter-spacing:0.1px;margin-right:0.20px;">Title</div>
<div class="val link" style="left:312px;top:138px;">Procure Computer Supplies</div>
<div class="lbl" style="right:1541px;top:172px;">Award Complete Date</div>
<div class="val" style="left:312px;top:172px;">4/5/23 11:22 AM</div>
<div class="lbl" style="right:1541px;top:205px;letter-spacing:0.06px;margin-right:0.24px;">Total Award Amount</div>
<div class="val" style="left:312px;top:205px;">990,000,000.00</div>
<div class="lbl" style="right:1541px;top:239px;letter-spacing:0.15px;margin-right:0.15px;"><span style="border-bottom:1px dotted #777;">Savings</span></div>
<div class="val" style="left:312px;top:239px;">210,000,000.00</div>
<div class="lbl" style="right:1541px;top:272px;letter-spacing:0.15px;margin-right:0.15px;">Savings</div>
<div class="val" style="left:312px;top:272px;">17.50%</div>

<!-- middle column -->
<div class="lbl" style="right:834px;top:128px;letter-spacing:0.08px;margin-right:0.22px;">Total Lines</div>
<div class="val" style="left:1018px;top:128px;">10000</div>
<div class="lbl" style="right:834px;top:162px;">Awarded Lines</div>
<div class="val" style="left:1018px;top:162px;">10000</div>
<div class="lbl" style="right:834px;top:196px;letter-spacing:0.2px;margin-right:0.10px;">Lines with No Award</div>
<div class="val" style="left:1018px;top:196px;">0</div>
<div class="lbl" style="right:834px;top:229px;">Lines Pending Award</div>
<div class="val" style="left:1018px;top:229px;">0</div>
<div class="lbl" style="right:834px;top:263px;">Lines with No Responses</div>
<div class="val" style="left:1018px;top:263px;">0</div>
<div class="lbl" style="right:834px;top:296px;">First Line Number</div>
<div class="val" style="left:1018px;top:296px;">10</div>
<div class="lbl" style="right:834px;top:330px;letter-spacing:0.22px;margin-right:0.08px;">Last Line Number</div>
<div class="val" style="left:1018px;top:330px;">100000</div>

<!-- right column -->
<div class="lbl" style="left:1367.7px;top:162px;text-align:left;">Contract Terms</div>
<div class="lbl" style="left:1309px;top:205px;text-align:left;">Award Attachments</div>
<div class="abs" style="left:1272px;top:252px;width:9px;height:9px;border-radius:50%;background:#4a9fe0;border:1px solid #3d8ccc;box-sizing:border-box;"></div>
<div class="lbl" style="left:1289px;top:248px;text-align:left;letter-spacing:0.2px;">Additional Information</div>
<svg class="abs" style="left:1457px;top:249px;" width="19" height="18" viewBox="0 0 19 18"><rect x="1" y="3.8" width="16.6" height="9.2" fill="#85898c"/><rect x="3.8" y="5.3" width="11.7" height="2" fill="#fff"/><path d="M0 9.8 H5 L5 8.2 L12.2 13.6 H0 Z" fill="#fff"/><path d="M1 11.6 H5.6 V9.4 L10.2 12.9 L5.6 16.8 V14 H1 Z" fill="#85898c"/></svg>

<!-- menu -->
<div id="menu">
<div class="mi" style="top:13px;">View Negotiation</div>
<div class="abs" style="left:2px;top:40px;width:335px;height:1px;background:#8a9aa3;"></div>
<div class="abs" style="left:24px;top:38px;width:297px;height:42px;border:2px solid #d0202a;"></div>
<div class="mi" style="top:53px;">Review and Submit Purchasing Documents</div>
<div class="mi" style="top:89px;">Cancel Purchasing Document Creation</div>
<div class="mi" style="top:125px;">Share Award Decision</div>
<div class="mi" style="top:161px;">Monitor Processes</div>
</div>

<!-- Analyze heading -->
<div class="abs" id="anh" style="left:21px;top:374.3px;font-size:19.2px;line-height:26px;color:#333;">Analyze</div>
<svg class="abs" style="left:96.5px;top:375.4px;" width="24" height="24" viewBox="0 0 24 24"><circle cx="12" cy="12" r="9.6" fill="none" stroke="#333" stroke-width="1.3"/><path d="M8.9 9.6c0-1.8 1.3-2.9 3.1-2.9s3.1 1.1 3.1 2.7c0 1.3-.8 1.9-1.7 2.5-.9.6-1.4 1.1-1.4 2.2v.4" fill="none" stroke="#333" stroke-width="1.4"/><circle cx="12" cy="17.3" r="1" fill="#333"/></svg>

<!-- tabs -->
<div class="t b" style="left:39px;top:424px;color:#1a1a1a;letter-spacing:0.2px;">Suppliers</div>
<div class="t" style="left:126px;top:424px;color:#1a1a1a;">Lines</div>
<div class="abs" style="left:27px;top:451px;width:88px;height:3px;background:#5f7a56;"></div>
<div class="abs" style="left:115px;top:453px;width:1687px;height:1px;background:#dcdfe2;"></div>
<div class="vl" style="left:27px;top:453px;height:387px;background:#dcdfe2;"></div>
<div class="vl" style="left:1801px;top:453px;height:387px;background:#dcdfe2;"></div>

<!-- toolbar -->
<div class="t" style="left:59px;top:484px;color:#0d0d0d;">Actions</div>
<div class="abs" style="left:113px;top:489.6px;border-left:5.5px solid transparent;border-right:5.5px solid transparent;border-top:8px solid #0d0d0d;"></div>
<div class="t" style="left:137px;top:484px;color:#0d0d0d;">View</div>
<div class="abs" style="left:174px;top:489.6px;border-left:5.5px solid transparent;border-right:5.5px solid transparent;border-top:8px solid #0d0d0d;"></div>
<div class="t" style="left:198px;top:484px;color:#0d0d0d;">Format</div>
<div class="abs" style="left:251px;top:489.6px;border-left:5.5px solid transparent;border-right:5.5px solid transparent;border-top:8px solid #0d0d0d;"></div>

<svg class="abs" style="left:300px;top:484px;" width="18" height="18" viewBox="0 0 18 18"><rect x="0.5" y="0.5" width="16" height="16" fill="#f1f1f1" stroke="#dedede"/><rect x="1" y="1" width="15" height="2.5" fill="#e6e6e6"/><rect x="2.6" y="4" width="2.2" height="11" fill="#e0e0e0"/><rect x="6" y="4" width="2" height="11" fill="#cfcfcf"/><rect x="9.2" y="4" width="2" height="11" fill="#cfcfcf"/><rect x="12.4" y="4" width="2" height="11" fill="#cfcfcf"/></svg>
<div class="t b" style="left:324.5px;top:485px;color:#a3a3a3;letter-spacing:0.6px;">Freeze</div>
<svg class="abs" style="left:394px;top:483px;" width="18" height="18" viewBox="0 0 18 18"><rect x="0.75" y="0.75" width="16.5" height="16.5" fill="none" stroke="#7a7a7a" stroke-width="1.3" stroke-dasharray="3.2 1.6"/><rect x="2.8" y="7.6" width="8" height="7.4" fill="#8c8c8c"/><path d="M3.8 10.3h6M3.8 12.6h6" stroke="#fff" stroke-width="1.3"/><path d="M5.5 9.4v5M8 9.4v5" stroke="#8c8c8c" stroke-width="0.9"/><path d="M11.2 7 L15.4 2.6 M12.4 2.4 L15.6 2.4 L15.6 5.6" fill="none" stroke="#8a8a8a" stroke-width="1.2"/></svg>
<div class="t b" style="left:419px;top:485px;color:#111;letter-spacing:0.38px;">Detach</div>
<svg class="abs" style="left:490px;top:484px;" width="18" height="18" viewBox="0 0 18 18"><path d="M11.8 0.4 H16.2 V13.2 H6.3 V9.5 H11.8 Z" fill="#d4d4d4"/><path d="M6.6 5.8 L0.7 10.9 L6.6 16.2 Z" fill="#d4d4d4"/></svg>
<div class="t b" style="left:515px;top:485px;color:#a3a3a3;letter-spacing:0.4px;">Wrap</div>
<div class="abs" style="left:573px;top:477px;width:71px;height:30px;border:1px solid #e1e4e6;background:#f4f5f6;border-radius:3px;box-sizing:content-box;"></div>
<div class="t b" style="left:584px;top:485px;color:#a3a3a3;letter-spacing:0px;">Analyze</div>

<!-- table -->
<div class="hl" style="left:46px;top:513px;width:1737px;background:#d8dcdf;"></div>
<div class="hl" style="left:46px;top:590px;width:1737px;background:#d8dcdf;"></div>
<div class="hl" style="left:46px;top:629px;width:1737px;background:#e8eaec;"></div>
<div class="hl" style="left:46px;top:669px;width:1737px;background:#e8eaec;"></div>
<div class="hl" style="left:46px;top:709px;width:1737px;background:#e8eaec;"></div>
<div class="hl" style="left:46px;top:748px;width:1737px;background:#e8eaec;"></div>
<div class="vl" style="left:69px;top:514px;height:274px;background:#d8dcdf;"></div>
<div class="abs" style="left:46px;top:788px;width:1737px;height:37px;background:#f1f3f6;"></div>
<div class="hl" style="left:46px;top:825px;width:1737px;background:#d8dcdf;"></div>
<div class="th" style="left:77px;top:542px;transform-origin:0 50%;">Supplier</div>
<div class="th" style="left:590px;top:542px;transform-origin:0 50%;">Supplier Site</div>
<div class="th" style="left:723px;top:533px;transform-origin:0 50%;">Supplier<br>Contact</div>
<div class="th" style="left:816px;width:200px;top:542px;text-align:center;">Awarded</div>
<div class="th" style="right:775px;top:533px;text-align:right;transform-origin:100% 50%;">Awarded<br>Lines</div>
<div class="th" style="left:1074px;top:542px;transform-origin:0 50%;">Will Participate</div>
<div class="th" style="left:1208px;top:542px;transform-origin:0 50%;">Response</div>
<div class="th" style="left:1305px;top:542px;transform-origin:0 50%;">Response Type</div>
<div class="th" style="left:1465px;width:200px;top:523px;text-align:center;">Total Amount</div>
<div class="hl" style="left:1432px;top:551px;width:266px;background:#dfe3e6;"></div>
<div class="th" style="right:278px;top:562px;text-align:right;transform-origin:100% 50%;">Response</div>
<div class="th" style="right:145px;top:562px;text-align:right;transform-origin:100% 50%;">Award</div>
<div class="th" style="left:1641px;width:200px;top:542px;text-align:center;">Shortlist</div>
<div class="td link" style="left:76px;top:602px;">Big Computers</div>
<svg class="abs" style="left:590px;top:602px;" width="10" height="11" viewBox="0 0 10 11" preserveAspectRatio="none"><defs><linearGradient id="fg" x1="0" y1="0" x2="1" y2="1"><stop offset="0" stop-color="#f29a64"/><stop offset="0.5" stop-color="#f7b892"/></linearGradient></defs><path d="M0 0 L10 0 L0 11 Z" fill="url(#fg)"/></svg>
<div class="td" style="left:597px;top:602px;">Main Office</div>
<svg class="abs" style="left:723px;top:602px;" width="10" height="11" viewBox="0 0 10 11" preserveAspectRatio="none"><defs><linearGradient id="fg" x1="0" y1="0" x2="1" y2="1"><stop offset="0" stop-color="#f29a64"/><stop offset="0.5" stop-color="#f7b892"/></linearGradient></defs><path d="M0 0 L10 0 L0 11 Z" fill="url(#fg)"/></svg>
<div class="td" style="left:730px;top:602px;">Anders, Alex</div>
<svg class="abs" style="left:907px;top:600.9px;" width="19" height="19" viewBox="0 0 19 19"><circle cx="9.5" cy="9.5" r="8.4" fill="#17a03b"/><circle cx="9.5" cy="9.5" r="7.7" fill="none" stroke="#148532" stroke-width="1.2"/><path d="M4.2 10 L7.6 13.2 L14.6 6.6" fill="none" stroke="#d8fbe2" stroke-width="2.3" stroke-linecap="round" stroke-linejoin="round"/></svg>
<div class="td num" style="right:775px;top:602px;">10,000</div>
<div class="td" style="left:1074px;top:602px;">Yes</div>
<div class="td link num" style="left:1208px;top:602px;">173933</div>
<div class="td" style="left:1305px;top:602px;">Primary</div>
<div class="td num" style="right:278px;top:602px;">990,000,000.00</div>
<div class="td num" style="right:145px;top:602px;">198,000,000.00</div>
<svg class="abs" style="left:1730.8px;top:600.9px;" width="19" height="19" viewBox="0 0 19 19"><circle cx="9.5" cy="9.5" r="8.4" fill="#17a03b"/><circle cx="9.5" cy="9.5" r="7.7" fill="none" stroke="#148532" stroke-width="1.2"/><path d="M4.2 10 L7.6 13.2 L14.6 6.6" fill="none" stroke="#d8fbe2" stroke-width="2.3" stroke-linecap="round" stroke-linejoin="round"/></svg>
<div class="td link" style="left:76px;top:642px;">Blue Semiconductor</div>
<svg class="abs" style="left:590px;top:642px;" width="10" height="11" viewBox="0 0 10 11" preserveAspectRatio="none"><defs><linearGradient id="fg" x1="0" y1="0" x2="1" y2="1"><stop offset="0" stop-color="#f29a64"/><stop offset="0.5" stop-color="#f7b892"/></linearGradient></defs><path d="M0 0 L10 0 L0 11 Z" fill="url(#fg)"/></svg>
<div class="td" style="left:597px;top:642px;">Philadelphia</div>
<svg class="abs" style="left:723px;top:642px;" width="10" height="11" viewBox="0 0 10 11" preserveAspectRatio="none"><defs><linearGradient id="fg" x1="0" y1="0" x2="1" y2="1"><stop offset="0" stop-color="#f29a64"/><stop offset="0.5" stop-color="#f7b892"/></linearGradient></defs><path d="M0 0 L10 0 L0 11 Z" fill="url(#fg)"/></svg>
<div class="td" style="left:730px;top:642px;">Mierot, Francois</div>
<svg class="abs" style="left:907px;top:640.9px;" width="19" height="19" viewBox="0 0 19 19"><circle cx="9.5" cy="9.5" r="8.4" fill="#17a03b"/><circle cx="9.5" cy="9.5" r="7.7" fill="none" stroke="#148532" stroke-width="1.2"/><path d="M4.2 10 L7.6 13.2 L14.6 6.6" fill="none" stroke="#d8fbe2" stroke-width="2.3" stroke-linecap="round" stroke-linejoin="round"/></svg>
<div class="td num" style="right:775px;top:642px;">10,000</div>
<div class="td" style="left:1074px;top:642px;">Yes</div>
<div class="td link num" style="left:1208px;top:642px;">173941</div>
<div class="td" style="left:1305px;top:642px;">Primary</div>
<div class="td num" style="right:278px;top:642px;">990,000,000.00</div>
<div class="td num" style="right:145px;top:642px;">198,000,000.00</div>
<svg class="abs" style="left:1730.8px;top:640.9px;" width="19" height="19" viewBox="0 0 19 19"><circle cx="9.5" cy="9.5" r="8.4" fill="#17a03b"/><circle cx="9.5" cy="9.5" r="7.7" fill="none" stroke="#148532" stroke-width="1.2"/><path d="M4.2 10 L7.6 13.2 L14.6 6.6" fill="none" stroke="#d8fbe2" stroke-width="2.3" stroke-linecap="round" stroke-linejoin="round"/></svg>
<div class="td link" style="left:76px;top:681px;">Fantastic Laptops</div>
<svg class="abs" style="left:590px;top:681px;" width="10" height="11" viewBox="0 0 10 11" preserveAspectRatio="none"><defs><linearGradient id="fg" x1="0" y1="0" x2="1" y2="1"><stop offset="0" stop-color="#f29a64"/><stop offset="0.5" stop-color="#f7b892"/></linearGradient></defs><path d="M0 0 L10 0 L0 11 Z" fill="url(#fg)"/></svg>
<div class="td" style="left:597px;top:681px;">Main Office</div>
<svg class="abs" style="left:723px;top:681px;" width="10" height="11" viewBox="0 0 10 11" preserveAspectRatio="none"><defs><linearGradient id="fg" x1="0" y1="0" x2="1" y2="1"><stop offset="0" stop-color="#f29a64"/><stop offset="0.5" stop-color="#f7b892"/></linearGradient></defs><path d="M0 0 L10 0 L0 11 Z" fill="url(#fg)"/></svg>
<div class="td" style="left:730px;top:681px;">Edwards, Fidel</div>
<svg class="abs" style="left:907px;top:679.9px;" width="19" height="19" viewBox="0 0 19 19"><circle cx="9.5" cy="9.5" r="8.4" fill="#17a03b"/><circle cx="9.5" cy="9.5" r="7.7" fill="none" stroke="#148532" stroke-width="1.2"/><path d="M4.2 10 L7.6 13.2 L14.6 6.6" fill="none" stroke="#d8fbe2" stroke-width="2.3" stroke-linecap="round" stroke-linejoin="round"/></svg>
<div class="td num" style="right:775px;top:681px;">10,000</div>
<div class="td" style="left:1074px;top:681px;">Yes</div>
<div class="td link num" style="left:1208px;top:681px;">173943</div>
<div class="td" style="left:1305px;top:681px;">Primary</div>
<div class="td num" style="right:278px;top:681px;">990,000,000.00</div>
<div class="td num" style="right:145px;top:681px;">198,000,000.00</div>
<svg class="abs" style="left:1730.8px;top:679.9px;" width="19" height="19" viewBox="0 0 19 19"><circle cx="9.5" cy="9.5" r="8.4" fill="#17a03b"/><circle cx="9.5" cy="9.5" r="7.7" fill="none" stroke="#148532" stroke-width="1.2"/><path d="M4.2 10 L7.6 13.2 L14.6 6.6" fill="none" stroke="#d8fbe2" stroke-width="2.3" stroke-linecap="round" stroke-linejoin="round"/></svg>
<div class="td link" style="left:76px;top:721px;">First Software</div>
<svg class="abs" style="left:590px;top:721px;" width="10" height="11" viewBox="0 0 10 11" preserveAspectRatio="none"><defs><linearGradient id="fg" x1="0" y1="0" x2="1" y2="1"><stop offset="0" stop-color="#f29a64"/><stop offset="0.5" stop-color="#f7b892"/></linearGradient></defs><path d="M0 0 L10 0 L0 11 Z" fill="url(#fg)"/></svg>
<div class="td" style="left:597px;top:721px;">NC Office</div>
<svg class="abs" style="left:723px;top:721px;" width="10" height="11" viewBox="0 0 10 11" preserveAspectRatio="none"><defs><linearGradient id="fg" x1="0" y1="0" x2="1" y2="1"><stop offset="0" stop-color="#f29a64"/><stop offset="0.5" stop-color="#f7b892"/></linearGradient></defs><path d="M0 0 L10 0 L0 11 Z" fill="url(#fg)"/></svg>
<div class="td" style="left:730px;top:721px;">Schweizer, Eric</div>
<svg class="abs" style="left:907px;top:719.9px;" width="19" height="19" viewBox="0 0 19 19"><circle cx="9.5" cy="9.5" r="8.4" fill="#17a03b"/><circle cx="9.5" cy="9.5" r="7.7" fill="none" stroke="#148532" stroke-width="1.2"/><path d="M4.2 10 L7.6 13.2 L14.6 6.6" fill="none" stroke="#d8fbe2" stroke-width="2.3" stroke-linecap="round" stroke-linejoin="round"/></svg>
<div class="td num" style="right:775px;top:721px;">10,000</div>
<div class="td" style="left:1074px;top:721px;">Yes</div>
<div class="td link num" style="left:1208px;top:721px;">173944</div>
<div class="td" style="left:1305px;top:721px;">Primary</div>
<div class="td num" style="right:278px;top:721px;">990,000,000.00</div>
<div class="td num" style="right:145px;top:721px;">198,000,000.00</div>
<svg class="abs" style="left:1730.8px;top:719.9px;" width="19" height="19" viewBox="0 0 19 19"><circle cx="9.5" cy="9.5" r="8.4" fill="#17a03b"/><circle cx="9.5" cy="9.5" r="7.7" fill="none" stroke="#148532" stroke-width="1.2"/><path d="M4.2 10 L7.6 13.2 L14.6 6.6" fill="none" stroke="#d8fbe2" stroke-width="2.3" stroke-linecap="round" stroke-linejoin="round"/></svg>
<div class="td link" style="left:76px;top:760px;">PennyPack Systems</div>
<svg class="abs" style="left:590px;top:760px;" width="10" height="11" viewBox="0 0 10 11" preserveAspectRatio="none"><defs><linearGradient id="fg" x1="0" y1="0" x2="1" y2="1"><stop offset="0" stop-color="#f29a64"/><stop offset="0.5" stop-color="#f7b892"/></linearGradient></defs><path d="M0 0 L10 0 L0 11 Z" fill="url(#fg)"/></svg>
<div class="td" style="left:597px;top:760px;">Corporate</div>
<svg class="abs" style="left:723px;top:760px;" width="10" height="11" viewBox="0 0 10 11" preserveAspectRatio="none"><defs><linearGradient id="fg" x1="0" y1="0" x2="1" y2="1"><stop offset="0" stop-color="#f29a64"/><stop offset="0.5" stop-color="#f7b892"/></linearGradient></defs><path d="M0 0 L10 0 L0 11 Z" fill="url(#fg)"/></svg>
<div class="td" style="left:730px;top:760px;">Grayson, Daniel</div>
<svg class="abs" style="left:907px;top:758.9px;" width="19" height="19" viewBox="0 0 19 19"><circle cx="9.5" cy="9.5" r="8.4" fill="#17a03b"/><circle cx="9.5" cy="9.5" r="7.7" fill="none" stroke="#148532" stroke-width="1.2"/><path d="M4.2 10 L7.6 13.2 L14.6 6.6" fill="none" stroke="#d8fbe2" stroke-width="2.3" stroke-linecap="round" stroke-linejoin="round"/></svg>
<div class="td num" style="right:775px;top:760px;">10,000</div>
<div class="td" style="left:1074px;top:760px;">Yes</div>
<div class="td link num" style="left:1208px;top:760px;">173945</div>
<div class="td" style="left:1305px;top:760px;">Primary</div>
<div class="td num" style="right:278px;top:760px;">990,000,000.00</div>
<div class="td num" style="right:145px;top:760px;">198,000,000.00</div>
<svg class="abs" style="left:1730.8px;top:758.9px;" width="19" height="19" viewBox="0 0 19 19"><circle cx="9.5" cy="9.5" r="8.4" fill="#17a03b"/><circle cx="9.5" cy="9.5" r="7.7" fill="none" stroke="#148532" stroke-width="1.2"/><path d="M4.2 10 L7.6 13.2 L14.6 6.6" fill="none" stroke="#d8fbe2" stroke-width="2.3" stroke-linecap="round" stroke-linejoin="round"/></svg>
<div class="td b" style="right:1258px;top:798px;color:#222;">Total</div>
<div class="td b num" style="right:144px;top:798px;color:#222;">990,000,000.00</div>
</body>
</html>
